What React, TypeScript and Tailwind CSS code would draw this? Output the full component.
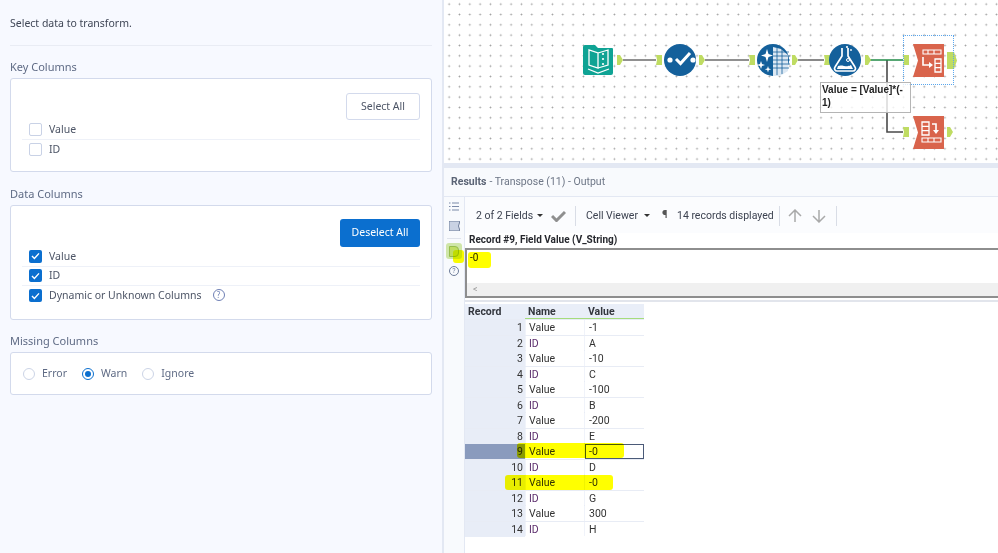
const rows = [
  ['1', 'Value', '-1'],
  ['2', 'ID', 'A'],
  ['3', 'Value', '-10'],
  ['4', 'ID', 'C'],
  ['5', 'Value', '-100'],
  ['6', 'ID', 'B'],
  ['7', 'Value', '-200'],
  ['8', 'ID', 'E'],
  ['9', 'Value', '-0'],
  ['10', 'ID', 'D'],
  ['11', 'Value', '-0'],
  ['12', 'ID', 'G'],
  ['13', 'Value', '300'],
  ['14', 'ID', 'H'],
]

function Check({ on }: { on?: boolean }) {
  return on ? (
    <span className="flex h-[13px] w-[13px] items-center justify-center rounded-[2px] bg-[#0b6fcf]">
      <svg width="9" height="8" viewBox="0 0 9 8" fill="none">
        <path d="M1 4l2.4 2.4L8 1.4" stroke="white" strokeWidth="1.4" />
      </svg>
    </span>
  ) : (
    <span className="h-[13px] w-[13px] rounded-[2px] border border-[#c9d2e6] bg-white" />
  )
}

function CheckRow({ label, on, line, help }: { label: string; on?: boolean; line?: boolean; help?: boolean }) {
  return (
    <div className={`flex h-[19.5px] items-center gap-[7px] pl-[7px] ${line ? 'border-b border-[#eef1f8]' : ''}`}>
      <Check on={on} />
      <span className="pt-px text-[10.5px] text-[#4d5566]">{label}</span>
      {help && (
        <span className="mb-[2px] ml-[4px] flex h-[12px] w-[12px] items-center justify-center rounded-full border border-[#6f80b5] text-[8px] text-[#6f80b5]">
          ?
        </span>
      )}
    </div>
  )
}

function Radio({ label, on }: { label: string; on?: boolean }) {
  return (
    <div className="flex items-center gap-[7px]">
      {on ? (
        <span className="flex h-[12px] w-[12px] items-center justify-center rounded-full border border-[#0b6fcf] bg-white">
          <span className="h-[6px] w-[6px] rounded-full bg-[#0b6fcf]" />
        </span>
      ) : (
        <span className="h-[12px] w-[12px] rounded-full border border-[#ccd4e6] bg-white" />
      )}
      <span className="text-[10.5px] text-[#5f6b85]">{label}</span>
    </div>
  )
}

function Config() {
  return (
    <div className="h-full w-[442px] shrink-0 bg-[#f7f9ff] px-[10px] font-['Noto_Sans',sans-serif]">
      <div className="flex h-[46px] items-center border-b border-[#e9ecf4] pt-[2px] text-[10.5px] text-[#3f4656]">Select data to transform.</div>
      <div className="mt-[13px] text-[11px] leading-[16px] text-[#5f6b85]">Key Columns</div>
      <div className="mt-[3px] h-[94px] rounded-[3px] border border-[#d3daec] bg-white px-[11px] pt-[14px]">
        <div className="flex justify-end">
          <div className="flex h-[27px] w-[74px] items-center justify-center rounded-[3px] border border-[#d3daec] text-[10.5px] text-[#4d5566]">Select All</div>
        </div>
        <div>
          <CheckRow label="Value" line />
          <CheckRow label="ID" />
        </div>
      </div>
      <div className="mt-[14px] text-[11px] leading-[16px] text-[#5f6b85]">Data Columns</div>
      <div className="mt-[3px] h-[115px] rounded-[3px] border border-[#d3daec] bg-white px-[11px] pt-[13px]">
        <div className="flex justify-end">
          <div className="flex h-[28px] w-[80px] items-center justify-center rounded-[3px] bg-[#0b6fcf] text-[10.5px] text-white">Deselect All</div>
        </div>
        <div>
          <CheckRow label="Value" on line />
          <CheckRow label="ID" on line />
          <CheckRow label="Dynamic or Unknown Columns" on help />
        </div>
      </div>
      <div className="mt-[13px] text-[11px] leading-[16px] text-[#5f6b85]">Missing Columns</div>
      <div className="mt-[3px] flex h-[43px] items-center gap-[15px] rounded-[3px] border border-[#d3daec] bg-white pl-[12px]">
        <Radio label="Error" />
        <Radio label="Warn" on />
        <Radio label="Ignore" />
      </div>
    </div>
  )
}

function Anchor({ x, y, w = 6, h = 10, side }: { x: number; y: number; w?: number; h?: number; side: 'in' | 'out' }) {
  const d = side === 'out' ? `M${x} ${y}h${w - 3}l3 ${h / 2}l-3 ${h / 2}h-${w - 3}z` : `M${x} ${y}h${w}v${h}h-${w}l1 -${h / 2}z`
  return <path d={d} fill="#bfdc62" />
}

// the workflow is a free canvas, so all of it is one drawing
function Workflow() {
  return (
    <svg className="absolute left-0 top-0" width="554" height="163" viewBox="444 0 554 163">
      <g fill="none" stroke="#6b6b6b" strokeWidth="1.6">
        <path d="M623 60H656" />
        <path d="M705 60H749" />
        <path d="M798 60H824" />
        <path d="M887 60V132H903" stroke="#4a4a4a" />
      </g>
      <path d="M870 60H903" stroke="#1f8a46" strokeWidth="1.6" />

      <Anchor x={617} y={55} side="out" />
      <Anchor x={656} y={55} side="in" />
      <Anchor x={699} y={55} side="out" />
      <Anchor x={749} y={55} side="in" />
      <Anchor x={792} y={55} side="out" />
      <Anchor x={824} y={55} side="in" />
      <Anchor x={865} y={55} side="out" />
      <Anchor x={903} y={55} side="in" />
      <Anchor x={947} y={52} w={10} h={17} side="out" />
      <Anchor x={903} y={127} side="in" />
      <Anchor x={947} y={127} side="out" />

      {/* input */}
      <path d="M585 45h10l3 3h14a1 1 0 0 1 1 1v24a2 2 0 0 1-2 2h-26a2 2 0 0 1-2-2V47a2 2 0 0 1 2-2z" fill="#0fa394" />
      <path d="M598 53v15l-9-3V50l9 3zM598 53l10-3v15l-10 3" fill="none" stroke="white" strokeWidth="1.3" />
      <path d="M588 69l10 4 11-4" fill="none" stroke="white" strokeWidth="1.2" />
      <circle cx="603" cy="54" r="1.1" fill="white" />
      <circle cx="603" cy="59" r="1.1" fill="white" />
      <circle cx="603" cy="64" r="1.1" fill="white" />

      {/* select */}
      <circle cx="680" cy="60" r="16" fill="#14609b" />
      <circle cx="670" cy="60" r="2.6" fill="white" />
      <circle cx="693" cy="60" r="2.6" fill="white" />
      <path d="M676 59l4.500 4.500L690 53" fill="none" stroke="white" strokeWidth="3" />

      {/* autofield */}
      <circle cx="773" cy="60" r="16" fill="#14609b" />
      <path d="M773 47l8 2 7 6v16l-8 5-7 0z" fill="#dce8f3" />
      <g stroke="#14609b" strokeWidth="0.8">
        <path d="M773 52H789M773 56H790M773 60H790M773 64H790M773 68H789M777 48V75M782 49V74" />
      </g>
      <path d="M767 49l1.500 5 4.500 1.500-4.500 1.500-1.500 5-1.500-5-4.500-1.500 4.500-1.500zM761 61l1 3 3 1-3 1-1 3-1-3-3-1 3-1zM768 66l.8 2.400 2.400.8-2.400.8-.8 2.400-.8-2.400-2.400-.8 2.400-.8z" fill="white" />

      {/* formula */}
      <circle cx="845" cy="60" r="16" fill="#14609b" />
      <path d="M842 48v8l-7 11a2.500 2.500 0 0 0 2 4h16a2.500 2.500 0 0 0 2-4l-7-11v-8" fill="none" stroke="white" strokeWidth="1.7" />
      <path d="M838 66c4-2 9 2 13-1l2 4h-16z" fill="white" />
      <circle cx="848" cy="60" r="1.5" fill="none" stroke="white" />
      <circle cx="847" cy="47" r="1.1" fill="white" />
      <circle cx="851" cy="50" r="0.9" fill="white" />

      {/* transpose */}
      <path d="M913 44h31v33h-31l5-16.500z" fill="#d9644c" />
      <path d="M923 50h18v4h-18z" fill="none" stroke="white" strokeWidth="1.1" />
      <path d="M928 50v4M934 50v4" stroke="white" strokeWidth="1.1" />
      <path d="M923 57v8h6" fill="none" stroke="white" strokeWidth="1.6" />
      <path d="M929 62l4 3-4 3z" fill="white" />
      <path d="M935 59h6v13h-6zM935 63.300h6M935 67.600h6" fill="none" stroke="white" strokeWidth="1.3" />

      {/* cross tab */}
      <path d="M913 116h31v33h-31l5-16.500z" fill="#d9644c" />
      <path d="M922 122h7v13h-7zM922 126.300h7M922 130.600h7" fill="none" stroke="white" strokeWidth="1.3" />
      <path d="M932 124h4v6" fill="none" stroke="white" strokeWidth="1.6" />
      <path d="M933 130h6l-3 4z" fill="white" />
      <path d="M922 138h19v4h-19z" fill="none" stroke="white" strokeWidth="1.1" />
      <path d="M928 138v4M934 138v4" stroke="white" strokeWidth="1.1" />
    </svg>
  )
}

function ResultGrid() {
  return (
    <div className="mt-[2px] w-[179px] bg-[#f0f3fa] text-[10.5px] leading-[15px]">
      <div className="grid grid-cols-[60px_59px_60px] bg-[#e9eef8] font-bold text-[#33363d]">
        <div className="h-[15px] pl-[3px]">Record</div>
        <div className="h-[15px] border-b border-[#a5dc7c] pl-[3px]">Name</div>
        <div className="h-[15px] border-b border-[#a5dc7c] pl-[4px]">Value</div>
      </div>
      {rows.map(([rec, name, val]) => (
        <div key={rec} className="grid h-[15.5px] grid-cols-[60px_59px_60px] border-t border-[#e8ecf5]">
          <div className={`pr-[2px] text-right ${rec === '9' ? 'bg-[#8a9bbd] text-[#2a2a2a]' : 'bg-[#e8edf7] text-[#333]'}`}>{rec}</div>
          <div className={`ml-px bg-white pl-[3px] ${name === 'ID' ? 'text-[#5d2f6e]' : 'text-[#333]'}`}>{name}</div>
          <div className={`ml-px bg-white text-[#333] ${rec === '9' ? 'border border-[#4b5a78] pl-[3px] leading-[13px]' : 'pl-[4px]'}`}>{val}</div>
        </div>
      ))}
    </div>
  )
}

function Results() {
  return (
    <div className="relative flex-1 overflow-hidden bg-white font-['Roboto',sans-serif]">
      <div className="relative h-[163px] bg-white bg-[radial-gradient(circle,#a0a0a0_0.7px,transparent_1.1px)] bg-[size:10.33px_10.33px] bg-[position:0px_-1px]">
        <Workflow />
        <div className="absolute left-[459px] top-[35px] h-[50px] w-[51px] border border-dotted border-[#5aa7ee]" />
        <div className="absolute left-[376px] top-[82px] h-[31px] w-[91px] border border-[#b5b5b5] bg-white/80 pl-[1px] font-['Liberation_Sans',sans-serif] text-[10px] font-bold leading-[13px] text-[#222]">
          Value = [Value]*(-
          <br />1)
        </div>
      </div>
      <div className="h-[5px] bg-[#e3e8f3]" />
      <div className="flex h-[29px] items-center border-b border-[#e3e8f3] bg-[#f8fafd] pl-[7px] text-[10.5px] text-[#6d7686]">
        <span className="font-bold text-[#5b6475]">Results</span>
        <span className="ml-[3px]">- Transpose (11) - Output</span>
      </div>
      <div className="flex h-[356px]">
        <div className="flex w-[20px] shrink-0 flex-col items-center bg-[#f8fafd] pt-[5px]">
          <svg className="h-[9px] w-[10px]" viewBox="0 0 10 9" stroke="#7b8aa8" strokeWidth="1">
            <path d="M3 1h7M3 4.500h7M3 8h7M0 1h1.500M0 4.500h1.500M0 8h1.500" />
          </svg>
          <svg className="mt-[10px]" width="11" height="10" viewBox="0 0 11 10">
            <path d="M0 0h11l-1.500 5L11 10H0z" fill="#c9d2e3" stroke="#6d7c99" />
          </svg>
          <div className="mt-[7px] h-px w-[14px] bg-[#dfe3ec]" />
          <span className="mt-[4px] flex h-[16px] w-[16px] items-center justify-center rounded-[3px] bg-[#cfe6a8]">
            <span className="h-[11px] w-[10px] rounded-r-[4px] border border-[#96bd4d] bg-[#bfdc62]" />
          </span>
          <span className="mt-[7px] flex h-[10px] w-[10px] items-center justify-center rounded-full border border-[#6d7c99] text-[7px] text-[#6d7c99]">?</span>
        </div>
        <div className="min-w-0 flex-1 border-l border-[#e3e8f3]">
          <div className="flex h-[36px] items-center whitespace-nowrap bg-[#fbfcfe] pl-[11px] pt-[1px] text-[10.5px] text-[#3c4250]">
            <span className="w-[54px]">2 of 2 Fields</span>
            <span className="ml-[7px] h-0 w-0 border-x-[3px] border-t-[3px] border-x-transparent border-t-[#333]" />
            <svg className="ml-[8px]" width="15" height="12" viewBox="0 0 15 12">
              <path d="M1 6l4.500 4.500L14 2" fill="none" stroke="#8f8f8f" strokeWidth="3" />
            </svg>
            <span className="ml-[9px] h-[20px] border-l border-[#d9dde6]" />
            <span className="ml-[10px] w-[51px]">Cell Viewer</span>
            <span className="ml-[7px] h-0 w-0 border-x-[3px] border-t-[3px] border-x-transparent border-t-[#333]" />
            <span className="ml-[12px] w-[6px] text-[11px] font-bold text-[#555]">¶</span>
            <span className="ml-[9px] w-[92px]">14 records displayed</span>
            <span className="ml-[10px] h-[20px] border-l border-[#d9dde6]" />
            <svg className="ml-[8px]" width="14" height="14" viewBox="0 0 14 14" fill="none" stroke="#a9a9a9" strokeWidth="1.500">
              <path d="M7 13V1M1 7l6-6 6 6" />
            </svg>
            <svg className="ml-[10px]" width="14" height="14" viewBox="0 0 14 14" fill="none" stroke="#a9a9a9" strokeWidth="1.500">
              <path d="M7 1v12M1 7l6 6 6-6" />
            </svg>
            <span className="ml-[10px] h-[20px] border-l border-[#d9dde6]" />
          </div>
          <div className="h-[15px] pl-[4px] text-[10px] font-bold leading-[14px] text-[#26282e]">Record #9, Field Value (V_String)</div>
          <div className="flex h-[50px] flex-col border-y-2 border-l-2 border-[#8e8e8e] bg-white">
            <div className="flex-1 pl-[3px] text-[10px] leading-[15px] text-[#222]">-0</div>
            <div className="flex h-[13px] items-center bg-[#f0f0f0] pl-[6px] text-[9px] text-[#9a9a9a]">&lt;</div>
          </div>
          <div className="mt-[2px] h-[2px] bg-[#e2e5ec]" />
          <ResultGrid />
        </div>
      </div>
      {/* marker strokes drawn over the screenshot */}
      <div className="absolute left-[24px] top-[252px] h-[16px] w-[23px] rounded-[3px] bg-[#ffff00] mix-blend-multiply" />
      <div className="absolute left-[9px] top-[250px] h-[13px] w-[11px] rounded-[3px] bg-[#ffff00] mix-blend-multiply" />
      <div className="absolute left-[73px] top-[443px] h-[15px] w-[107px] rounded-[3px] bg-[#ffff00] mix-blend-multiply" />
      <div className="absolute left-[61px] top-[475px] h-[15px] w-[108px] rounded-[3px] bg-[#ffff00] mix-blend-multiply" />
    </div>
  )
}

export default function App() {
  return (
    <div className="flex h-[553px] w-[998px] overflow-hidden bg-white">
      <Config />
      <div className="w-[2px] shrink-0 bg-[#e3e8f3]" />
      <Results />
    </div>
  )
}
